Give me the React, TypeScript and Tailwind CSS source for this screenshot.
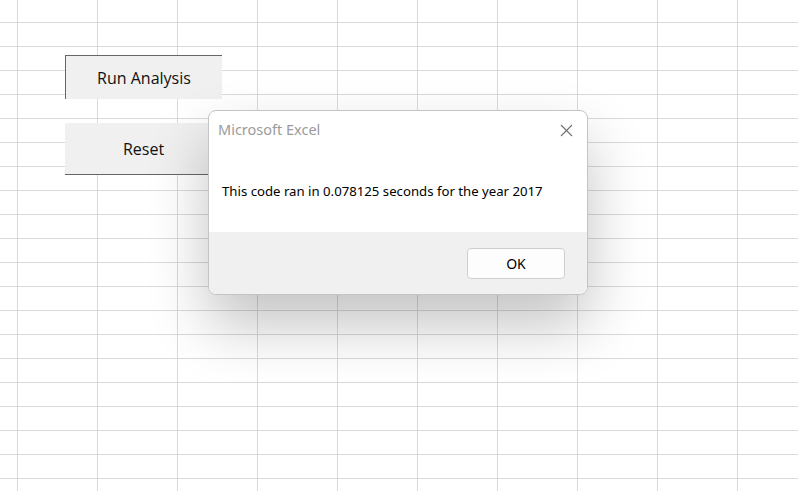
export default function App() {
  return (
    <div className="relative h-[491px] w-[798px] overflow-hidden bg-white bg-[linear-gradient(to_right,#dadada_1px,transparent_1px),linear-gradient(to_bottom,#dadada_1px,transparent_1px)] bg-size-[80px_24px] bg-position-[17px_22px] font-['Open_Sans',sans-serif]">
      {/* sheet buttons */}
      <div className="flex flex-col gap-[24px] pl-[65px] pt-[55px]">
        <div className="flex h-[44px] w-[157px] items-center justify-center border-l-[1.5px] border-t-[1.5px] border-l-[#666] border-t-[#666] bg-[#f0f0f0] text-[16px] text-[#111]">
          Run Analysis
        </div>
        <div className="flex h-[52px] w-[157px] items-center justify-center border-b-[1.5px] border-b-[#666] bg-[#f0f0f0] text-[16px] text-[#111]">
          Reset
        </div>
      </div>

      {/* message box */}
      <div className="absolute left-[208px] top-[110px] flex h-[185px] w-[380px] flex-col overflow-hidden rounded-[8px] border border-[#c4c4c4] bg-white shadow-[0_30px_60px_rgba(0,0,0,0.24)] font-['Noto_Sans',sans-serif]">
        <div className="flex h-[36px] items-center justify-between pl-[9px] pr-[14px] pt-[2px]">
          <span className="text-[14.5px] text-[#9b9b9b]">Microsoft Excel</span>
          <svg width="13" height="13" viewBox="0 0 13 13" className="text-[#6f6f6f]">
            <path d="M1 1L12 12M12 1L1 12" stroke="currentColor" strokeWidth="1.1" fill="none" />
          </svg>
        </div>
        <div className="flex flex-1 items-center pl-[13px] pt-[4px] text-[13.2px] text-black">
          This code ran in 0.078125 seconds for the year 2017
        </div>
        <div className="flex h-[62px] items-start justify-end bg-[#f0f0f0] pr-[22px] pt-[16px]">
          <div className="flex h-[31px] w-[98px] items-center justify-center rounded-[4px] border border-[#cfcfcf] bg-[#fdfdfd] text-[14px] text-black">
            OK
          </div>
        </div>
      </div>
    </div>
  );
}
